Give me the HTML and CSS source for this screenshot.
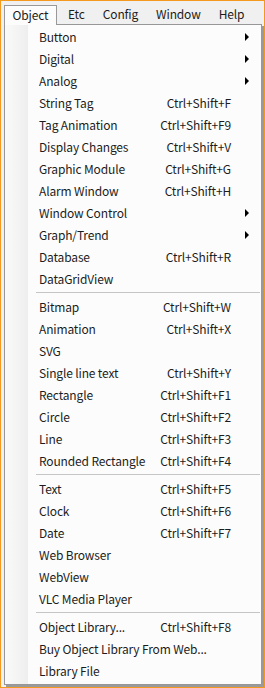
FILE: index.html
```html
<!DOCTYPE html>
<html lang="en">
  <head>
    <meta charset="UTF-8" />
    <title>Object menu</title>
    <link rel="stylesheet" href="styles.css">
  </head>
  <body>
    <div class="frame">
      <ul class="menubar">
        <li class="open">Object</li>
        <li>Etc</li>
        <li>Config</li>
        <li>Window</li>
        <li>Help</li>
      </ul>

      <div class="dropdown">
        <div class="item sub">Button</div>
        <div class="item sub">Digital</div>
        <div class="item sub">Analog</div>
        <div class="item">String Tag<span class="key">Ctrl+Shift+F</span></div>
        <div class="item">Tag Animation<span class="key">Ctrl+Shift+F9</span></div>
        <div class="item">Display Changes<span class="key">Ctrl+Shift+V</span></div>
        <div class="item">Graphic Module<span class="key">Ctrl+Shift+G</span></div>
        <div class="item">Alarm Window<span class="key">Ctrl+Shift+H</span></div>
        <div class="item sub">Window Control</div>
        <div class="item sub">Graph/Trend</div>
        <div class="item">Database<span class="key">Ctrl+Shift+R</span></div>
        <div class="item">DataGridView</div>
        <div class="sep"></div>
        <div class="item">Bitmap<span class="key">Ctrl+Shift+W</span></div>
        <div class="item">Animation<span class="key">Ctrl+Shift+X</span></div>
        <div class="item">SVG</div>
        <div class="item">Single line text<span class="key">Ctrl+Shift+Y</span></div>
        <div class="item">Rectangle<span class="key">Ctrl+Shift+F1</span></div>
        <div class="item">Circle<span class="key">Ctrl+Shift+F2</span></div>
        <div class="item">Line<span class="key">Ctrl+Shift+F3</span></div>
        <div class="item">Rounded Rectangle<span class="key">Ctrl+Shift+F4</span></div>
        <div class="sep"></div>
        <div class="item">Text<span class="key">Ctrl+Shift+F5</span></div>
        <div class="item">Clock<span class="key">Ctrl+Shift+F6</span></div>
        <div class="item">Date<span class="key">Ctrl+Shift+F7</span></div>
        <div class="item">Web Browser</div>
        <div class="item">WebView</div>
        <div class="item">VLC Media Player</div>
        <div class="sep"></div>
        <div class="item">Object Library...<span class="key">Ctrl+Shift+F8</span></div>
        <div class="item">Buy Object Library From Web...</div>
        <div class="item">Library File</div>
      </div>
    </div>
  </body>
</html>
```

FILE: styles.css
```css
* {
  margin: 0;
  padding: 0;
  box-sizing: border-box;
}
body {
  font-family: "Noto Sans CJK KR", "Noto Sans", sans-serif;
  font-size: 12px;
  letter-spacing: -0.15px;
  color: #1c1c1c;
  background-color: #f0f0f0;
}
.frame {
  width: 265px;
  height: 688px;
  border: 1px solid #f39a1e;
  background-color: #f0f0f0;
}
ul.menubar {
  display: flex;
  height: 23px;
  padding: 4px 0 0 3px;
  list-style: none;
}
ul.menubar li {
  height: 19px;
  line-height: 17px;
  padding: 0 9px;
}
ul.menubar li.open {
  width: 53px;
  height: 20px;
  margin-right: 2px;
  padding: 0;
  text-align: center;
  border: 1px solid #999;
  border-bottom: none;
  background-color: #fcfcfc;
  position: relative;
  z-index: 2;
}
.dropdown {
  position: relative;
  width: 258px;
  height: 661px;
  margin-left: 3px;
  padding-top: 1px;
  border: 1px solid #979797;
  background: linear-gradient(to right, #fafafa 0, #eeeeee 23px, #fcfcfc 23px);
  box-shadow: 2px 2px 0 #9a9a9a;
}
.item {
  display: flex;
  justify-content: space-between;
  align-items: center;
  height: 22px;
  padding: 0 30px 2px 34px;
  white-space: nowrap;
}
.item.sub::after {
  content: "";
  position: relative;
  left: 18px;
  top: 1px;
  border-left: 4px solid #000;
  border-top: 4px solid transparent;
  border-bottom: 4px solid transparent;
}
.sep {
  height: 6px;
  margin: 0 1px 0 31px;
  border-top: 2px solid transparent;
  border-bottom: 3px solid #fcfcfc;
  background-color: #c5c5c5;
  background-clip: padding-box;
}
```
